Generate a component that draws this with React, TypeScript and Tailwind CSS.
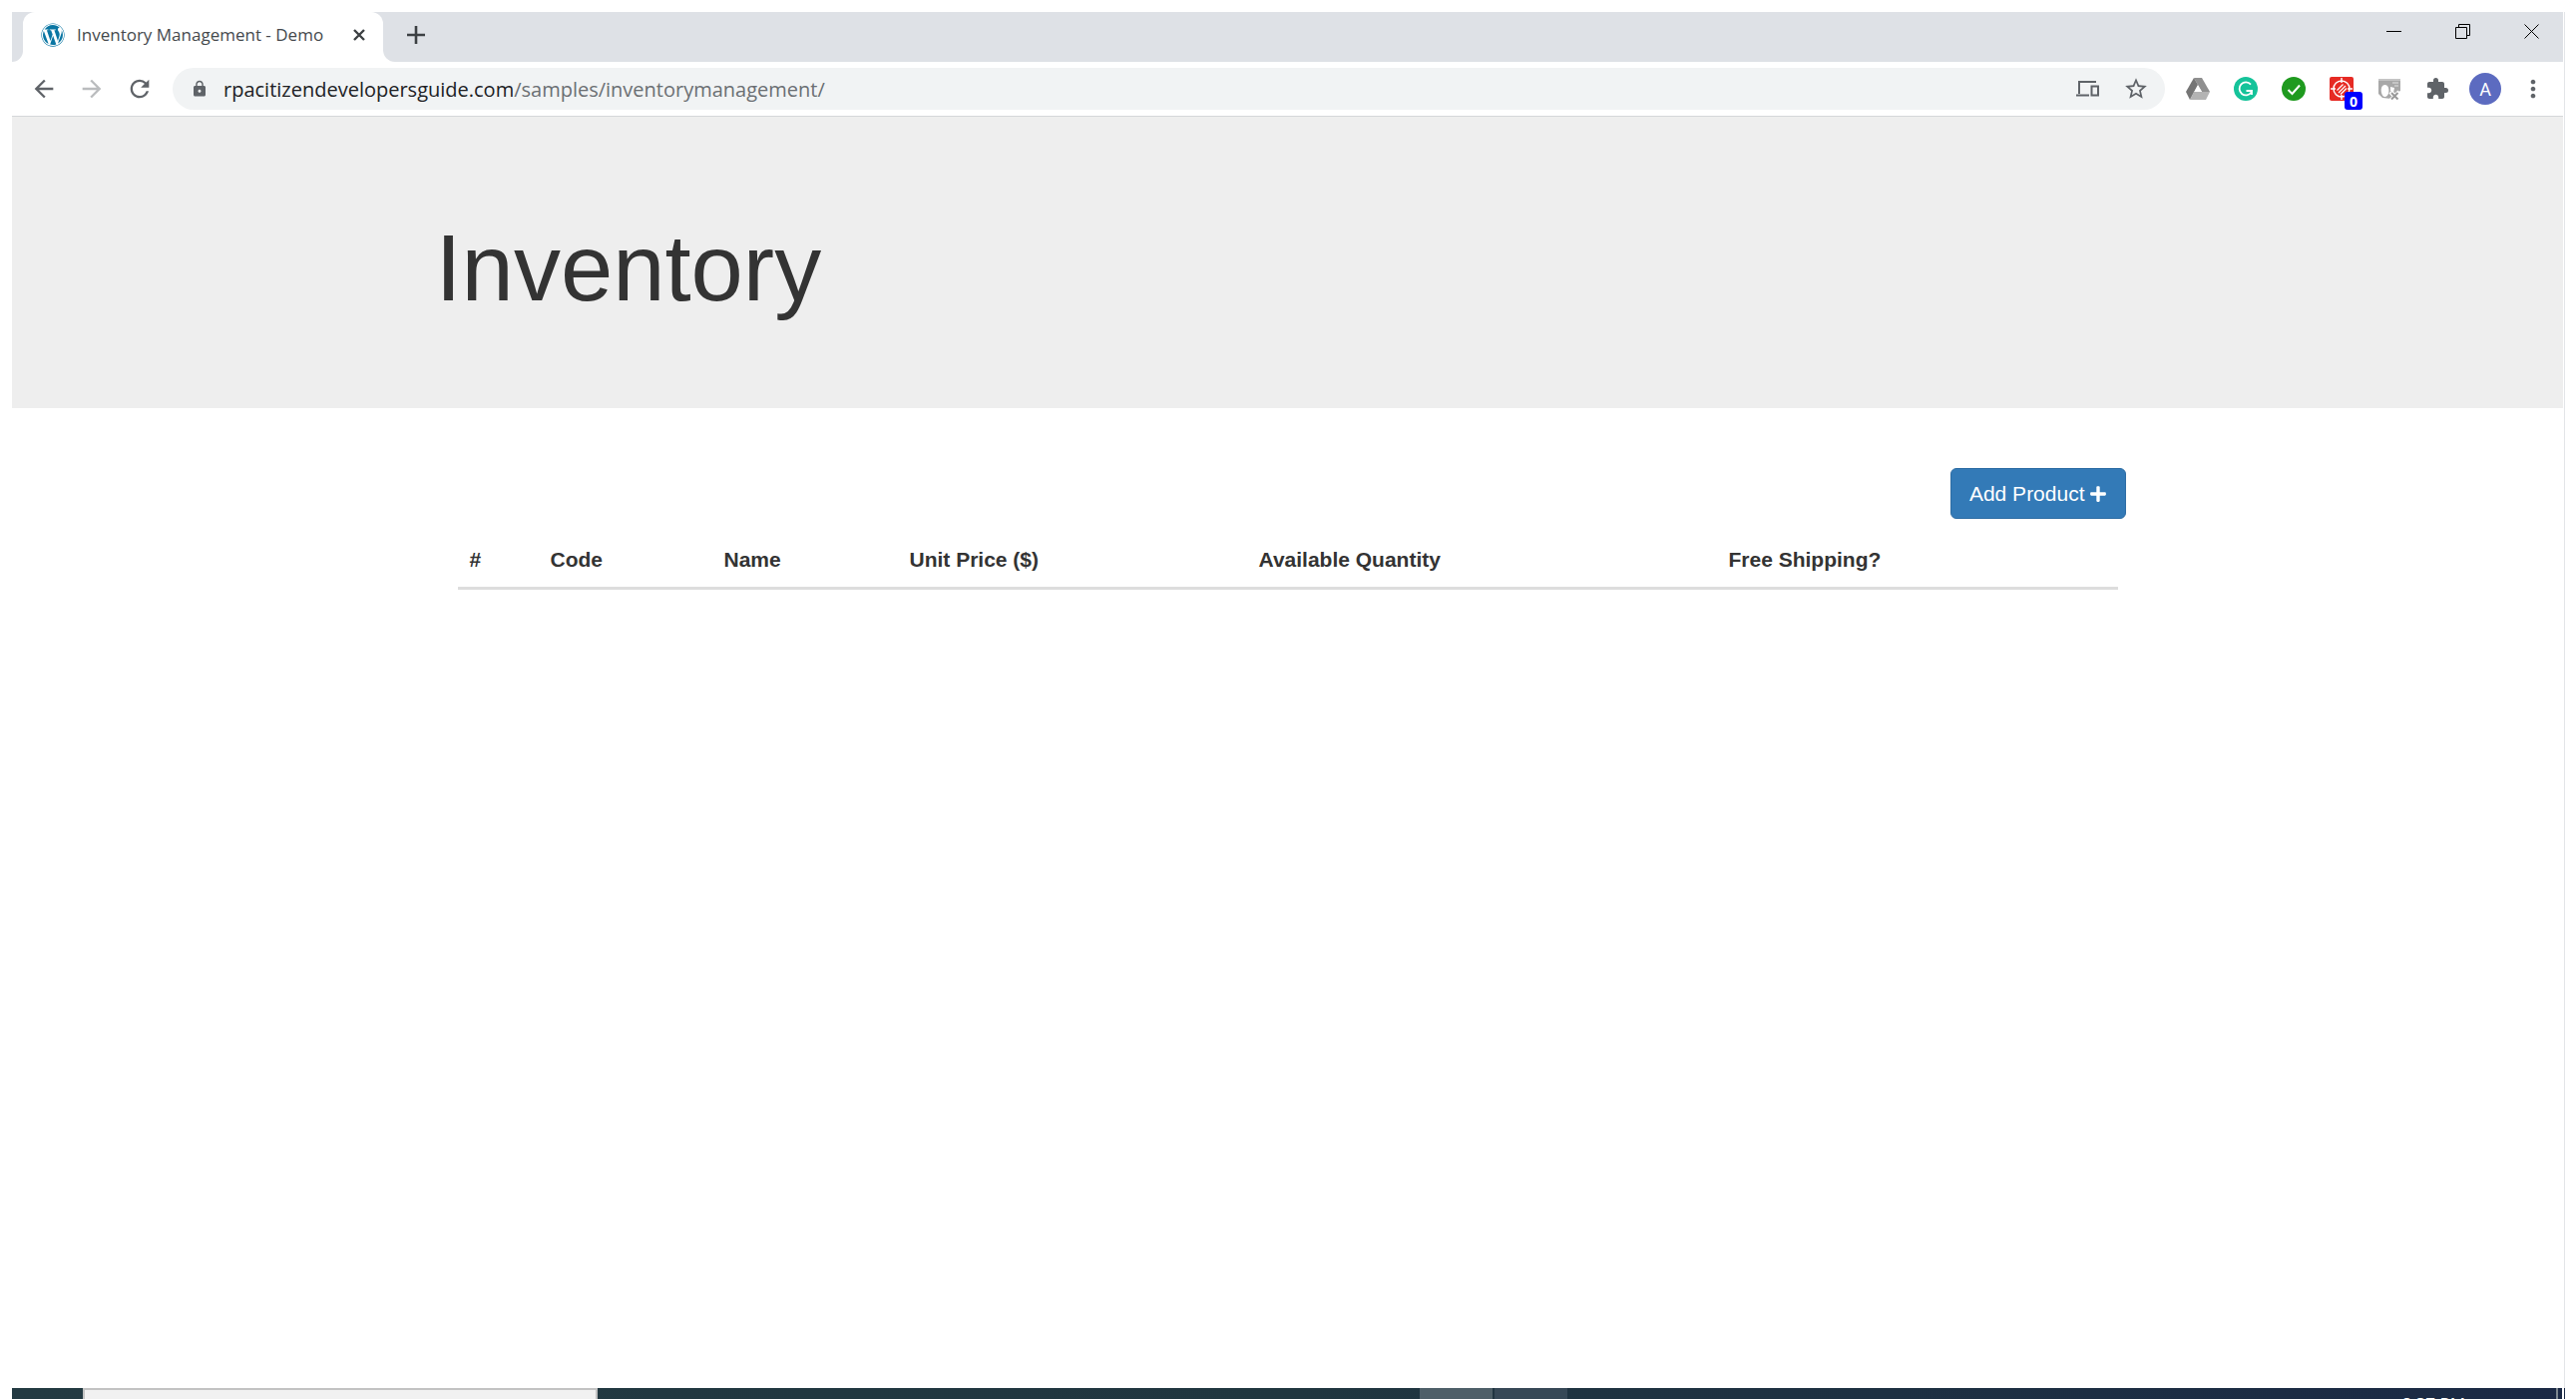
import React from "react";
import { FaWordpress, FaPlus } from "react-icons/fa";
import {
  MdArrowBack,
  MdArrowForward,
  MdRefresh,
  MdLock,
  MdStarBorder,
  MdExtension,
  MdMoreVert,
} from "react-icons/md";

function DriveIcon() {
  return (
    <svg viewBox="0 0 24 22" className="h-[22px] w-6">
      <path d="M8 0h8l8 14h-8z" fill="#8f8f8f" />
      <path d="M8 0l4 7-8 15L0 14z" fill="#757575" />
      <path d="M8 14h16l-4 8H4z" fill="#b3b3b3" />
      <path d="M12 7.500l4 6.500H8.300z" fill="#fff" />
    </svg>
  );
}

function GrammarlyIcon() {
  return (
    <svg viewBox="0 0 24 24" className="size-6">
      <circle cx="12" cy="12" r="12" fill="#15c39a" />
      <path
        d="M17 7.600A6.500 6.500 0 1 0 17.500 15.500M12.500 14h5.500v4"
        fill="none"
        stroke="#fff"
        strokeWidth="1.800"
      />
    </svg>
  );
}

function CheckIcon() {
  return (
    <svg viewBox="0 0 24 24" className="size-6">
      <circle cx="12" cy="12" r="12" fill="#1f9a1f" />
      <path d="M6.500 13l4 4L18 8.500" fill="none" stroke="#fff" strokeWidth="2" />
    </svg>
  );
}

function TargetIcon() {
  return (
    <svg viewBox="0 0 24 24" className="size-6">
      <rect width="24" height="24" rx="2" fill="#e62a24" />
      <g fill="none" stroke="#fff" strokeWidth="1.400">
        <circle cx="12" cy="12" r="8" />
        <path d="M12 1v5M12 18v5M1 12h5M18 12h5" />
        <path d="M7.500 13.500l6-6M9 16l7-7M11 17.500l6-6" strokeWidth="1.200" />
      </g>
    </svg>
  );
}

function BlockedImageIcon() {
  return (
    <svg viewBox="0 0 24 24" className="size-6">
      <path d="M1 2h22v12l-6 3-3 5-9-1-4-4z" fill="#a8a8a8" />
      <path d="M1 2h22v2H1z" fill="#c4c4c4" />
      <path d="M4 11c1-4 6-4 7 0s0 8-3 9-5-5-4-9z" fill="#fff" />
      <path d="M13 10l4 1-1 5-3-2z" fill="#fff" />
      <path d="M15 6h6M17 9h4" stroke="#e2e2e2" />
      <path d="M13 15l9 9M22 15l-9 9" stroke="#fff" strokeWidth="4.500" />
      <path d="M14 16l6.500 6.500M20.500 16L14 22.500" stroke="#999" strokeWidth="2" />
    </svg>
  );
}

function DevicesIcon() {
  return (
    <svg viewBox="0 0 24 16" className="h-4 w-6" fill="none" stroke="#5f6368" strokeWidth="2">
      <path d="M20 1H3v12M0 14.500h13" />
      <path d="M15.500 5.500h6.500v9h-6.500z" />
    </svg>
  );
}

function TitleBar() {
  return (
    <div className="flex h-[50px] bg-white">
      <div className="w-[11px] rounded-br-xl bg-[#dee1e6]" />
      <div className="flex w-[361px] bg-linear-to-b from-[#dee1e6] from-50% to-white to-50%">
        <div className="flex flex-1 items-center rounded-t-xl bg-white pb-1 pl-[18px] pr-[18px]">
          <FaWordpress className="size-6 text-[#0a76a3]" />
          <span className="ml-3 flex-1 whitespace-nowrap text-[17px] leading-6 text-[#45494d]">
            Inventory Management - Demo
          </span>
          <button aria-label="Close tab">
            <svg viewBox="0 0 12 12" className="size-3">
              <path d="M1 1l10 10M11 1L1 11" stroke="#3c4043" strokeWidth="2.400" />
            </svg>
          </button>
        </div>
      </div>
      <div className="flex flex-1 items-center justify-between rounded-bl-xl bg-[#dee1e6] pl-6">
        <button aria-label="New tab" className="pb-1">
          <svg viewBox="0 0 18 18" className="size-[18px]">
            <path d="M9 0v18M0 9h18" stroke="#3c4043" strokeWidth="2.600" />
          </svg>
        </button>
        <div className="flex gap-[54px] self-start pr-6 pt-3 text-black">
          <button aria-label="Minimize">
            <svg viewBox="0 0 15 15" className="size-[15px]">
              <path d="M0 7.500h15" stroke="currentColor" />
            </svg>
          </button>
          <button aria-label="Restore">
            <svg viewBox="0 0 15 15" className="size-[15px]" fill="none" stroke="currentColor">
              <path d="M.5 3.500h11v11H.5zM3.500 3.500v-3h11v11h-3" />
            </svg>
          </button>
          <button aria-label="Close">
            <svg viewBox="0 0 15 15" className="size-[15px]">
              <path d="M.5.5l14 14M14.500.5l-14 14" stroke="currentColor" />
            </svg>
          </button>
        </div>
      </div>
    </div>
  );
}

function Toolbar() {
  return (
    <div className="flex h-[55px] items-center border-b border-[#d5d7da] px-[18px] text-[#5f6368]">
      <div className="flex gap-5">
        <button aria-label="Back"><MdArrowBack className="size-7" /></button>
        <button aria-label="Forward" className="text-[#babcbe]"><MdArrowForward className="size-7" /></button>
        <button aria-label="Reload"><MdRefresh className="size-7" /></button>
      </div>
      <div className="ml-[19px] flex h-[42px] flex-1 items-center rounded-full bg-[#f1f3f4] pl-[18px] pr-4">
        <MdLock className="size-[18px]" />
        <a href="#" className="ml-[15px] flex-1 pt-0.5 text-[20px] leading-7 text-[#6b6f73]">
          <span className="text-[#202124]">rpacitizendevelopersguide.com</span>/samples/inventorymanagement/
        </a>
        <button aria-label="Send to your devices"><DevicesIcon /></button>
        <button aria-label="Bookmark" className="ml-[23px]"><MdStarBorder className="size-[26px]" /></button>
      </div>
      <div className="ml-[21px] flex items-center gap-6">
        <button aria-label="Drive"><DriveIcon /></button>
        <button aria-label="Grammarly"><GrammarlyIcon /></button>
        <button aria-label="Checker"><CheckIcon /></button>
        <button aria-label="Recorder" className="relative">
          <TargetIcon />
          <span className="absolute -bottom-[9px] -right-[9px] flex size-[18px] items-center justify-center rounded-[3px] bg-[#0000fe] text-[14px] font-bold text-white">
            0
          </span>
        </button>
        <button aria-label="Images blocked"><BlockedImageIcon /></button>
        <button aria-label="Extensions"><MdExtension className="size-6" /></button>
        <button
          aria-label="Profile"
          className="-mx-1 flex size-8 items-center justify-center rounded-full bg-[#5c6bc0] font-[Roboto,sans-serif] text-[18px] text-white"
        >
          A
        </button>
        <button aria-label="Menu" className="-mx-0.5"><MdMoreVert className="size-7" /></button>
      </div>
    </div>
  );
}

const columns = [
  { label: "#", width: "w-[81px]" },
  { label: "Code", width: "w-[174px]" },
  { label: "Name", width: "w-[186px]" },
  { label: "Unit Price ($)", width: "w-[350px]" },
  { label: "Available Quantity", width: "w-[471px]" },
  { label: "Free Shipping?", width: "w-auto" },
];

function InventoryPage() {
  return (
    <main className="flex-1 font-['Liberation_Sans',Arial,sans-serif] text-[21px] leading-[30px] text-[#333]">
      <header className="bg-[#eee] pb-[98px] pt-[110px]">
        <div className="mx-auto max-w-[1756px] px-6">
          <h1 className="text-[94px] leading-[84px]">Inventory</h1>
        </div>
      </header>
      <section className="mx-auto max-w-[1756px] px-[46px] pt-[60px]">
        <div className="-mr-2 flex justify-end">
          <button className="flex items-center gap-1 rounded-md border border-[#2e6da4] bg-[#337ab7] px-[18px] py-[10px] leading-[29px] text-white">
            Add Product <FaPlus className="size-[18px]" />
          </button>
        </div>
        <table className="mt-[14px] w-full table-fixed">
          <thead>
            <tr className="border-b-[3px] border-[#ddd]">
              {columns.map((c) => (
                <th key={c.label} scope="col" className={`${c.width} px-3 py-3 text-left font-bold`}>
                  {c.label}
                </th>
              ))}
            </tr>
          </thead>
        </table>
      </section>
    </main>
  );
}

function Taskbar() {
  return (
    <footer className="flex h-[11px] overflow-hidden bg-linear-to-r from-[#233a42] via-[#20363f] to-[#1b2945]">
      <div className="w-[71px]" />
      <div className="w-[516px] border-x-2 border-t-2 border-[#c2c2c2] bg-[#f1f1f1]" />
      <div className="w-[824px]" />
      <div className="w-[73px] bg-[#4e5f68]" />
      <div className="ml-0.5 w-[73px] bg-[#364856]" />
      <div className="flex flex-1 items-start justify-end">
        <time className="mr-[91px] mt-1 whitespace-nowrap text-[17px] leading-6 text-white">8:37 PM</time>
        <div className="h-full w-0.5 bg-[#7d878f]" />
        <div className="ml-1 mr-px h-full w-0.5 bg-white" />
      </div>
    </footer>
  );
}

export default function App() {
  return (
    <div className="flex min-h-screen flex-col bg-white pl-3 pr-[11px] pt-3 font-['Open_Sans','Noto_Sans',sans-serif]">
      <div className="flex flex-1 flex-col border-r border-[#e3e5e8] pr-px">
        <TitleBar />
        <Toolbar />
        <InventoryPage />
      </div>
      <Taskbar />
    </div>
  );
}
